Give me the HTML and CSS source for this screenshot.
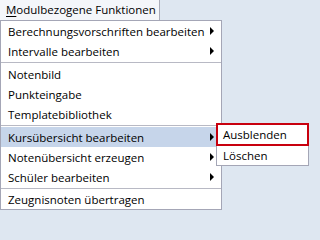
FILE: index.html
```html
<!DOCTYPE html>
<html lang="de">
<head>
<meta charset="utf-8">
<link rel="stylesheet" href="styles.css">
</head>
<body>
<div class="bar">
  <div class="tab"><span class="acc">M</span>odulbezogene Funktionen</div>
</div>
<div class="menu">
  <div class="item has-sub"><span>Berechnungsvorschriften bearbeiten</span><i class="arrow"></i></div>
  <div class="item has-sub"><span>Intervalle bearbeiten</span><i class="arrow"></i></div>
  <div class="sep"></div>
  <div class="item"><span>Notenbild</span></div>
  <div class="item"><span>Punkteingabe</span></div>
  <div class="item"><span>Templatebibliothek</span></div>
  <div class="sep"></div>
  <div class="item has-sub active"><span>Kursübersicht bearbeiten</span><i class="arrow"></i>
    <div class="submenu">
      <div class="subitem focus">Ausblenden</div>
      <div class="subitem">Löschen</div>
    </div>
  </div>
  <div class="item has-sub"><span>Notenübersicht erzeugen</span><i class="arrow"></i></div>
  <div class="item has-sub"><span>Schüler bearbeiten</span><i class="arrow"></i></div>
  <div class="sep"></div>
  <div class="item last"><span>Zeugnisnoten übertragen</span></div>
</div>
</body>
</html>
```

FILE: styles.css
```css
html, body {
  margin: 0;
  padding: 0;
  background: #dee7f1;
}
body {
  width: 310px;
  height: 210px;
  overflow: hidden;
  font-family: "Open Sans", "Noto Sans", "Liberation Sans", sans-serif;
  font-size: 11.5px;
  color: #000;
}
.bar {
  display: flex;
  height: 20px;
}
.tab {
  width: 153px;
  height: 20px;
  padding-left: 6px;
  line-height: 19px;
  white-space: nowrap;
  background: #f4f6fa;
  border-right: 1px solid #a9abb8;
  box-sizing: content-box;
}
.acc {
  text-decoration: underline;
  text-underline-offset: 2px;
}
.menu {
  width: 220px;
  border: 1px solid #a4a6b6;
  background: #fff;
  display: flex;
  flex-direction: column;
}
.item {
  position: relative;
  height: 20px;
  display: flex;
  align-items: center;
  padding-left: 7px;
}
.item.last {
  height: 19px;
}
.item span {
  flex: 1;
  white-space: nowrap;
}
.item.active {
  background: #c6d5ea;
}
.arrow {
  width: 0;
  height: 0;
  border-top: 4px solid transparent;
  border-bottom: 4px solid transparent;
  border-left: 4px solid #000;
  margin-right: 7px;
}
.sep {
  height: 1px;
  background: #b8b9c4;
  margin: 1px 0 1px;
}
.submenu {
  position: absolute;
  left: 215px;
  top: -4px;
  width: 91px;
  border: 1px solid #a4a6b6;
  background: #fff;
  display: flex;
  flex-direction: column;
}
.subitem {
  height: 19px;
  line-height: 19px;
  padding-left: 6px;
  white-space: nowrap;
}
.subitem.focus {
  height: 19px;
  margin: -1px -1px 0 -1px;
  border: 2px solid #c8000e;
  line-height: 19px;
  padding-left: 5px;
}
```
